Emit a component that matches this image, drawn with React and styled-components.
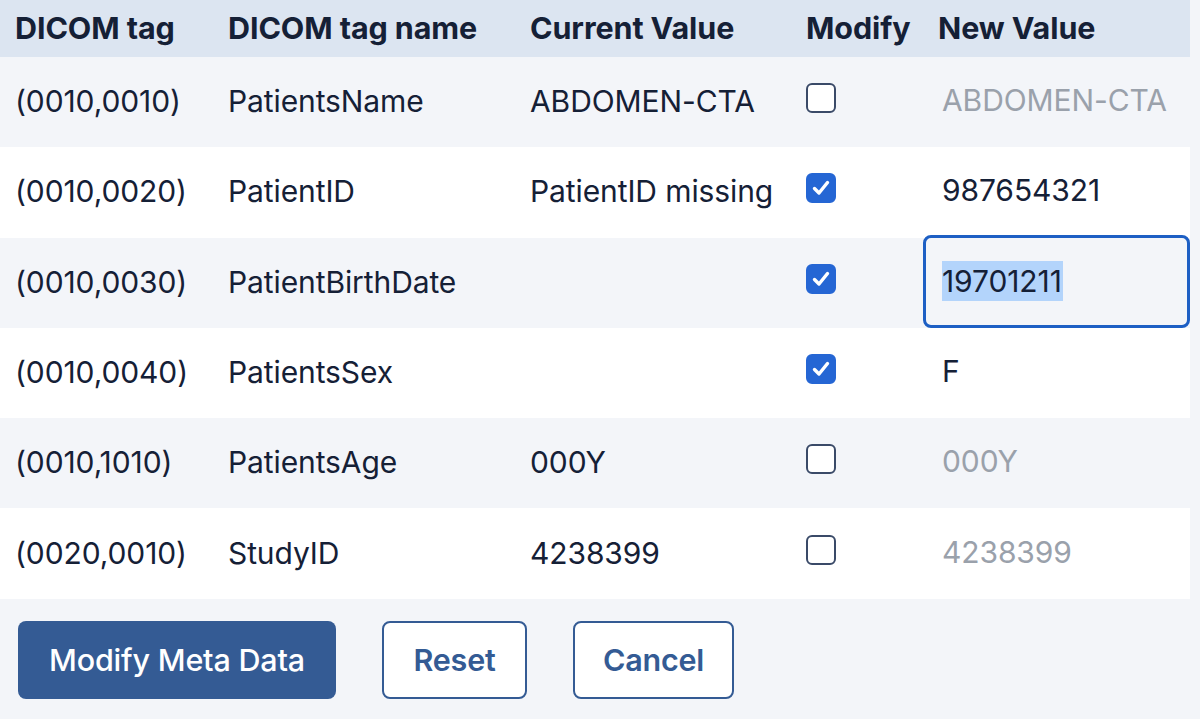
import React from "react";
import styled, { createGlobalStyle, css } from "styled-components";

const GlobalStyle = createGlobalStyle`
  html, body { margin: 0; padding: 0; background: #f3f5f9; }
  body { font-family: Inter, "Noto Sans", "Liberation Sans", sans-serif; color: #152036; }
  * { box-sizing: border-box; }
`;

const Page = styled.div`
  width: 1200px;
  height: 719px;
  background: #f3f5f9;
  overflow: hidden;
`;

const Table = styled.div`
  width: 1190px;
  display: grid;
  grid-template-columns: 213px 302px 276px 132px 267px;
`;

const HeadCell = styled.div`
  height: 57px;
  background: #dce5f1;
  padding: 0 0 2px 15px;
  display: flex;
  align-items: center;
  font-size: 30.5px;
  font-weight: 700;
  color: #152036;
  letter-spacing: -0.1px;
  white-space: nowrap;
`;

const Cell = styled.div`
  height: 90.3px;
  background: ${(p) => (p.$striped ? "#f3f5f9" : "#ffffff")};
  padding-left: 15px;
  padding-bottom: 2px;
  display: flex;
  align-items: center;
  font-size: 30px;
  letter-spacing: -0.1px;
  color: #152036;
  white-space: nowrap;
  position: relative;
`;

const ValueCell = styled(Cell)`
  padding-left: 0;
  padding-bottom: 0;
`;

const Box = styled.span`
  width: 30px;
  height: 30px;
  border-radius: 6px;
  margin-bottom: 6px;
  display: inline-flex;
  align-items: center;
  justify-content: center;
  ${(p) =>
    p.$checked
      ? css`
          background: #2566d4;
          border: 2px solid #2566d4;
        `
      : css`
          background: #ffffff;
          border: 2px solid #3a4a68;
        `}
`;

const ValueInput = styled.div`
  height: 93px;
  width: 270px;
  margin-top: -2px;
  padding-left: 16px;
  padding-bottom: 2px;
  display: flex;
  align-items: center;
  border-radius: 8px;
  border: 3px solid ${(p) => (p.$focused ? "#1d5fc4" : "transparent")};
  background: transparent;
  color: ${(p) => (p.$muted ? "#9aa1ab" : "#152036")};
  font-size: 30px;
`;

const Selected = styled.span`
  background: #b3d4fb;
  padding: 0 1px 0 0;
  line-height: 40px;
`;

const Footer = styled.div`
  display: flex;
  align-items: center;
  gap: 46px;
  padding: 22px 0 0 18px;
`;

const Button = styled.button`
  height: 78px;
  border-radius: 8px;
  font-family: inherit;
  font-size: 30.5px;
  font-weight: 500;
  letter-spacing: -0.2px;
  cursor: pointer;
  padding: 0;
  width: ${(p) => p.$w}px;
  ${(p) =>
    p.$primary
      ? css`
          background: #345b94;
          border: none;
          color: #ffffff;
        `
      : css`
          background: #ffffff;
          border: 2px solid #345b94;
          color: #345b94;
          font-weight: 600;
        `}
`;

const Check = ({ checked }) => (
  <Box $checked={checked}>
    {checked && (
      <svg width="20" height="20" viewBox="0 0 20 20">
        <path d="M3.5 10.5 L8 15 L16.5 4.5" fill="none" stroke="#fff" strokeWidth="3.4" strokeLinecap="round" strokeLinejoin="round" />
      </svg>
    )}
  </Box>
);

const rows = [
  { tag: "(0010,0010)", name: "PatientsName", cur: "ABDOMEN-CTA", mod: false, val: "ABDOMEN-CTA" },
  { tag: "(0010,0020)", name: "PatientID", cur: "PatientID missing", mod: true, val: "987654321" },
  { tag: "(0010,0030)", name: "PatientBirthDate", cur: "", mod: true, val: "19701211", focus: true },
  { tag: "(0010,0040)", name: "PatientsSex", cur: "", mod: true, val: "F" },
  { tag: "(0010,1010)", name: "PatientsAge", cur: "000Y", mod: false, val: "000Y" },
  { tag: "(0020,0010)", name: "StudyID", cur: "4238399", mod: false, val: "4238399" },
];

export default function App() {
  return (
    <Page>
      <GlobalStyle />
      <Table>
        <HeadCell>DICOM tag</HeadCell>
        <HeadCell>DICOM tag name</HeadCell>
        <HeadCell>Current Value</HeadCell>
        <HeadCell>Modify</HeadCell>
        <HeadCell>New Value</HeadCell>
        {rows.map((r, i) => {
          const s = i % 2 === 0;
          return (
            <React.Fragment key={r.tag}>
              <Cell $striped={s}>{r.tag}</Cell>
              <Cell $striped={s}>{r.name}</Cell>
              <Cell $striped={s}>{r.cur}</Cell>
              <Cell $striped={s}>
                <Check checked={r.mod} />
              </Cell>
              <ValueCell $striped={s}>
                <ValueInput $focused={r.focus} $muted={!r.mod}>
                  {r.focus ? <Selected>{r.val}</Selected> : r.val}
                </ValueInput>
              </ValueCell>
            </React.Fragment>
          );
        })}
      </Table>
      <Footer>
        <Button $primary $w={318}>Modify Meta Data</Button>
        <Button $w={145}>Reset</Button>
        <Button $w={161}>Cancel</Button>
      </Footer>
    </Page>
  );
}
